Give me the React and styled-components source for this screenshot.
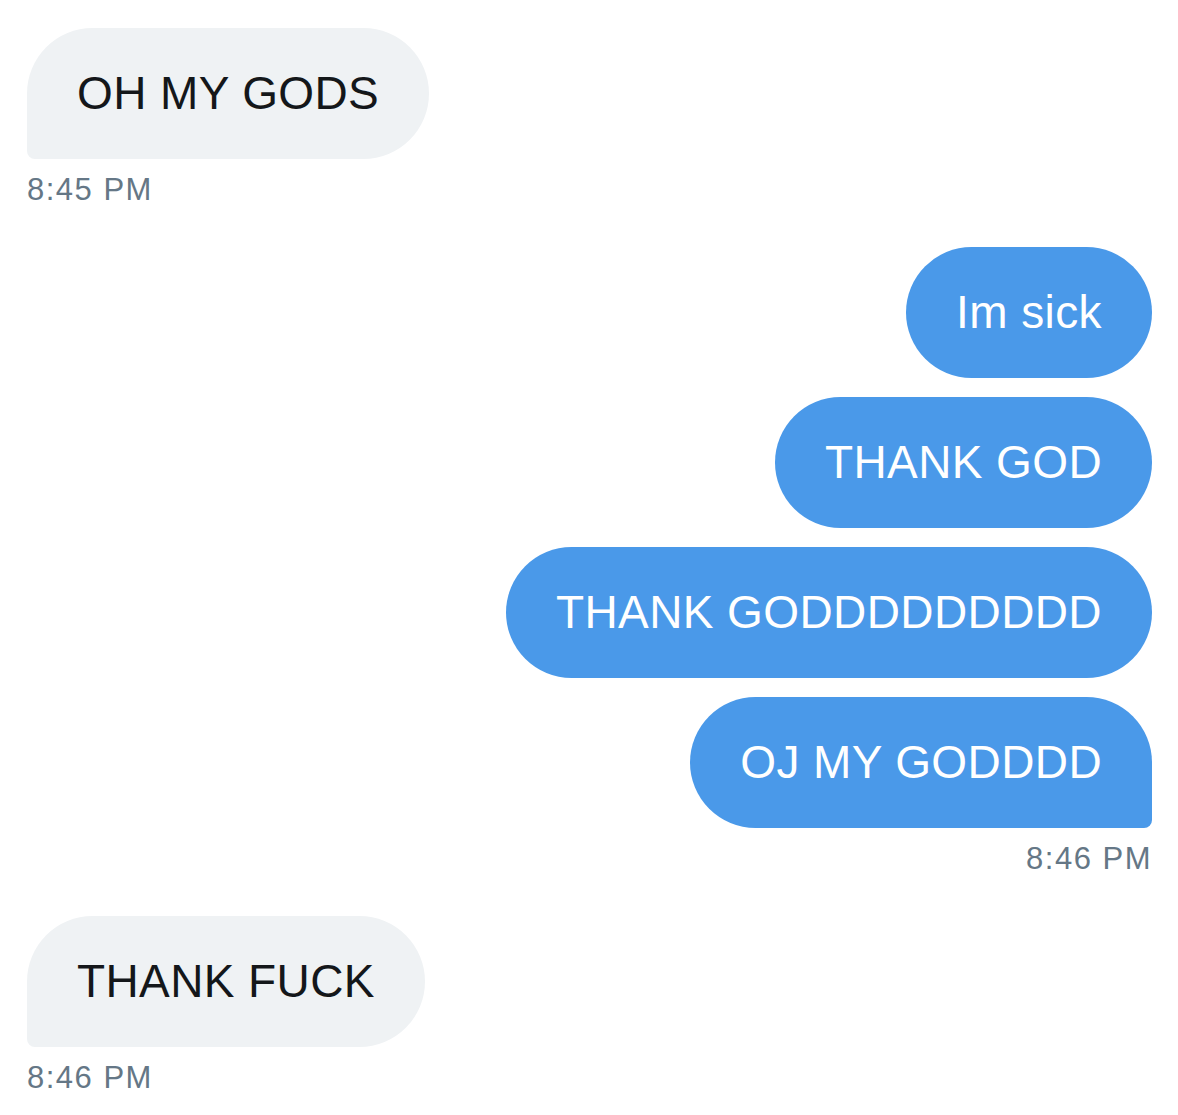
import styled, { createGlobalStyle } from 'styled-components';

const GlobalStyle = createGlobalStyle`
  body {
    margin: 0;
    background: #ffffff;
    font-family: "Liberation Sans", Arial, sans-serif;
  }
`

const Thread = styled.div`
  display: flex;
  flex-direction: column;
  gap: 39px;
  padding: 28px 26px 20px 27px;
`

const Group = styled.div`
  display: flex;
  flex-direction: column;
  align-items: ${p => (p.$mine ? 'flex-end' : 'flex-start')};
`

const Stack = styled.div`
  display: flex;
  flex-direction: column;
  align-items: inherit;
  gap: 19px;
`

const Bubble = styled.div`
  padding: 36px 50px;
  font-size: 46px;
  line-height: 59px;
  letter-spacing: 0.4px;
  white-space: nowrap;
  border-radius: 66px;
  background: ${p => (p.$mine ? '#4a99e9' : '#eff2f4')};
  color: ${p => (p.$mine ? '#ffffff' : '#14171a')};
  ${p => p.$last && (p.$mine
    ? 'border-bottom-right-radius: 8px;'
    : 'border-bottom-left-radius: 8px;')}
`

const Time = styled.div`
  margin-top: 13px;
  font-size: 31px;
  line-height: 36px;
  letter-spacing: 1.5px;
  color: #657786;
`

const groups = [
  { mine: false, time: '8:45 PM', texts: ['OH MY GODS'] },
  {
    mine: true,
    time: '8:46 PM',
    texts: ['Im sick', 'THANK GOD', 'THANK GODDDDDDDDD', 'OJ MY GODDDD'],
  },
  { mine: false, time: '8:46 PM', texts: ['THANK FUCK'] },
]

export default function App() {
  return (
    <>
      <GlobalStyle />
      <Thread>
        {groups.map((g, i) => (
          <Group key={i} $mine={g.mine}>
            <Stack>
              {g.texts.map((t, j) => (
                <Bubble key={j} $mine={g.mine} $last={j === g.texts.length - 1}>
                  {t}
                </Bubble>
              ))}
            </Stack>
            <Time>{g.time}</Time>
          </Group>
        ))}
      </Thread>
    </>
  )
}
